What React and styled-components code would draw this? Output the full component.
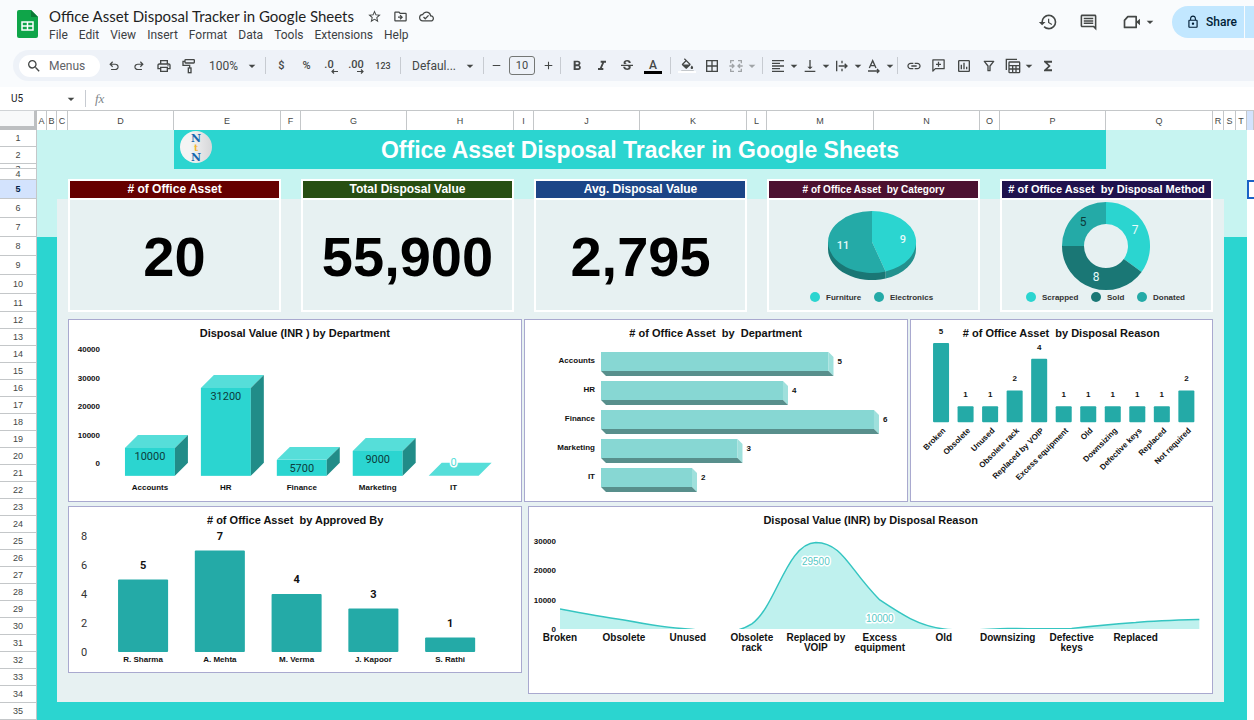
import React from "react";
import styled, { createGlobalStyle, css } from "styled-components";
import {
  MdStarBorder, MdOutlineDriveFileMove, MdOutlineCloudDone, MdOutlinePrint,
  MdArrowDropDown, MdRemove, MdAdd, MdFormatBold, MdFormatItalic,
  MdStrikethroughS, MdFormatColorFill, MdBorderAll, MdFormatAlignLeft,
  MdVerticalAlignBottom, MdLink, MdOutlineInsertChart, MdFunctions, MdHistory,
  MdOutlineComment, MdLockOutline, MdSearch,
} from "react-icons/md";

const sans = '"Liberation Sans", Arial, sans-serif';
const ui = 'Roboto, Inter, sans-serif';
const aqua = "#2bd5d0";
const teal = "#24aaa7";
const deep = "#1a7775";
const pale = "#c7f4f1";
const mist = "#e7f1f2";

const GlobalStyle = createGlobalStyle`
  * { box-sizing: border-box; }
  body { margin: 0; background: #fff; overflow: hidden; }
  button, input, select { font: inherit; color: inherit; border: 0; padding: 0; margin: 0; background: none; outline: none; }
  h1, h2, p { margin: 0; }
  svg { display: block; flex: none; }
`;

/* ---------- shell ---------- */

const Shell = styled.div`
  min-height: 100vh;
  display: flex;
  flex-direction: column;
  font-family: ${ui};
  color: #444746;
`;

const TopBar = styled.header`
  display: flex;
  align-items: flex-start;
  height: 50px;
  padding-left: 17px;
  background: #f9fbfd;
`;

const SheetsLogo = styled.svg`
  margin: 10px 11px 0 0;
`;

const DocColumn = styled.div`
  padding-top: 6px;
`;

const DocRow = styled.div`
  display: flex;
  align-items: center;
  height: 21px;
`;

const DocTitle = styled.h1`
  font: 400 15px/21px Lato, ${ui};
  color: #1f1f1f;
  margin-right: 13px;
  white-space: nowrap;
`;

const DocButton = styled.button`
  width: 26px;
  display: flex;
  color: #444746;
`;

const MenuBar = styled.nav`
  display: flex;
  gap: 11px;
  font-size: 12px;
  line-height: 16px;
`;

const MenuItem = styled.button`
  color: #3c4043;
`;

const TopActions = styled.div`
  display: flex;
  align-items: center;
  margin-left: auto;
  padding-top: 6px;
`;

const ActionButton = styled.button`
  width: 40px;
  height: 32px;
  display: flex;
  align-items: center;
  justify-content: center;
`;

const VideoButton = styled(ActionButton)`
  width: 50px;
  margin-left: 7px;
`;

const ShareGroup = styled.div`
  display: flex;
  gap: 1px;
  margin-left: 7px;
`;

const ShareButton = styled.button`
  display: flex;
  align-items: center;
  gap: 6px;
  width: 72px;
  height: 32px;
  padding-left: 14px;
  border-radius: 16px 0 0 16px;
  background: #c2e7ff;
  color: #001d35;
  font-size: 12px;
  font-weight: 500;
`;

const ShareMore = styled.button`
  width: 9px;
  background: #c2e7ff;
`;

/* ---------- toolbar ---------- */

const ToolbarBand = styled.div`
  background: #f9fbfd;
  padding: 0 0 6px 13px;
`;

const Toolbar = styled.div`
  display: flex;
  align-items: center;
  height: 31px;
  padding-left: 6px;
  border-radius: 16px 0 0 16px;
  background: #eef2f8;
  overflow: hidden;
  font-size: 12px;
`;

const SearchPill = styled.label`
  display: flex;
  align-items: center;
  gap: 7px;
  width: 81px;
  height: 22px;
  margin-right: 1px;
  padding-left: 7px;
  border-radius: 11px;
  background: #fff;

  input { width: 50px; font-size: 12px; }
  input::placeholder { color: #5f6368; opacity: 1; }
`;

const ToolButton = styled.button`
  display: flex;
  align-items: center;
  justify-content: center;
  flex: none;
  width: ${(p) => p.$w || 25}px;
  height: 25px;
  font-size: ${(p) => p.$text || 12}px;
  font-weight: 500;
  opacity: ${(p) => (p.$faded ? 0.45 : 1)};
`;

const CaretTool = styled(ToolButton)`
  justify-content: flex-start;
  padding-left: 4px;
`;

const Divider = styled.span`
  flex: none;
  width: 1px;
  height: 17px;
  margin: 0 3px;
  background: #c7cbd1;
`;

const Picker = styled.label`
  display: flex;
  align-items: center;
  flex: none;
  width: ${(p) => p.$w}px;
  padding: 0 2px 0 8px;

  select { appearance: none; flex: 1; width: 20px; font-size: 12px; }
`;

const SizeInput = styled.input`
  && {
    flex: none;
    width: 26px;
    height: 19px;
    margin: 0 4px;
    border: 1px solid #747775;
    border-radius: 3px;
    text-align: center;
    font-size: 11px;
  }
`;

const FormulaBar = styled.div`
  display: flex;
  align-items: center;
  height: 23px;
  font-size: 10px;
  background: #fff;
`;

const NameBox = styled.label`
  display: flex;
  align-items: center;
  width: 82px;
  padding-left: 11px;

  input { width: 52px; color: #202124; }
`;

const FormulaField = styled.label`
  display: flex;
  flex: 1;
  align-items: center;
  padding-left: 6px;
  font: italic 13px "Liberation Serif", serif;
  color: #80868b;

  input { flex: 1; margin-left: 8px; }
`;

/* ---------- sheet ---------- */

const columns = [
  ["A", 10], ["B", 10], ["C", 11], ["D", 106], ["E", 107], ["F", 20], ["G", 106],
  ["H", 107], ["I", 20], ["J", 106], ["K", 107], ["L", 20], ["M", 107], ["N", 106],
  ["O", 20], ["P", 106], ["Q", 107], ["R", 11], ["S", 12], ["T", 11], ["", 7],
];
const track = columns.map((c) => `minmax(0, ${c[1]}fr)`).join(" ");

const rowHeights = { 3: 5, 4: 11, 5: 19, 6: 19, 7: 19, 8: 19, 9: 19, 10: 19, 11: 18 };
const rows = Array.from({ length: 35 }, (_, i) => ({ n: i + 1, h: rowHeights[i + 1] || 17 }));

const Sheet = styled.main`
  flex: 1;
  display: grid;
  grid-template-columns: 37px minmax(0, 1fr);
  grid-template-rows: 20px 1fr;
  font-family: ${sans};
`;

const Corner = styled.div`
  border-top: 1px solid #d0d3d6;
  border-right: 3px solid #bdbfc1;
  border-bottom: 4px solid #bdbfc1;
  background: #f8f9fa;
`;

const ColumnHeads = styled.div`
  display: grid;
  grid-template-columns: ${track};
  border-top: 1px solid #c4c7c9;
`;

const ColumnHead = styled.div`
  display: flex;
  align-items: center;
  justify-content: center;
  border-right: 1px solid #c4c7c9;
  font-size: 9px;
  color: #444746;
  background: ${(p) => (p.$on ? "#d3e3fd" : "#fff")};
`;

const RowHeads = styled.div`
  border-right: 1px solid #c4c7c9;
`;

const RowHead = styled.div`
  display: flex;
  align-items: ${(p) => (p.$h < 10 ? "flex-start" : p.$h < 16 ? "flex-end" : "center")};
  justify-content: center;
  height: ${(p) => p.$h}px;
  overflow: hidden;
  border-bottom: 1px solid #c4c7c9;
  font-size: 9px;
  line-height: 10px;
  color: #444746;
  ${(p) => p.$on && css`background: #d3e3fd; color: #041e49; font-weight: 700;`}
`;

const Canvas = styled.div`
  display: grid;
  grid-template-columns: ${track};
  grid-template-rows: 39px 10px 20px 38px 75px auto minmax(17px, 1fr);
`;

const Fill = styled.div`
  grid-column: ${(p) => p.$cols};
  grid-row: ${(p) => p.$rows};
  background: ${(p) => p.$bg};
`;

const Banner = styled.div`
  grid-column: 5 / 17;
  grid-row: 1;
  display: grid;
  grid-template-columns: 44px 1fr 44px;
  align-items: center;
  background: ${aqua};
`;

const Brand = styled.svg`
  justify-self: end;
  align-self: start;
  margin: 1px 6px 0 0;
`;

const BannerTitle = styled.h2`
  text-align: center;
  font: 700 23px/36px ${sans};
  color: #fff;
  white-space: nowrap;
`;

const SelectedCell = styled.div`
  grid-column: 21;
  grid-row: 3;
  margin-top: 1px;
  border: 2px solid #1a62c6;
  border-right: 0;
`;

const Card = styled.section`
  grid-column: ${(p) => p.$cols};
  grid-row: 3 / 6;
  display: flex;
  flex-direction: column;
  border: 2px solid #fff;
  background: ${mist};
`;

const CardTitle = styled.h2`
  height: 19px;
  border-bottom: 2px solid #fff;
  background: ${(p) => p.$bg};
  color: #fff;
  text-align: center;
  font: 700 ${(p) => p.$size || 11}px/17px ${sans};
  white-space: pre;
`;

const BigNumber = styled.p`
  flex: 1;
  display: flex;
  align-items: center;
  justify-content: center;
  padding-top: 3px;
  font: 700 56px/60px ${sans};
  color: #000;
`;

const ChartGrid = styled.div`
  grid-column: 4 / 18;
  grid-row: 6;
  display: flex;
  flex-direction: column;
  gap: 4px;
  padding: 7px 0 8px;
`;

const ChartRow = styled.div`
  display: flex;
  align-items: flex-start;
  gap: ${(p) => p.$gap}px;
`;

const Panel = styled.section`
  flex: ${(p) => p.$grow} 1 0;
  min-width: 0;
  display: grid;
  border: 1px solid #a9a9cf;
  background: #fff;

  > * { grid-area: 1 / 1; }
`;

const PanelTitle = styled.h2`
  padding-top: 6px;
  text-align: center;
  font: 700 11px/14px ${sans};
  color: #111;
  white-space: pre;
`;

const Plot = styled.svg`
  width: 100%;
  height: auto;
  overflow: visible;
`;

const Label = styled.text`
  font: 700 ${(p) => p.$size || 8}px ${(p) => p.$font || sans};
  font-weight: ${(p) => p.$weight || 700};
  fill: ${(p) => p.$color || "#111"};
  text-anchor: ${(p) => p.$anchor || "middle"};
`;

const HaloLabel = styled(Label)`
  stroke: #fff;
  stroke-width: 3px;
  stroke-linejoin: round;
  paint-order: stroke;
`;

/* ---------- icons ---------- */

const Glyph = ({ d, size = 16, children }) => (
  <svg width={size} height={size} viewBox="0 0 24 24" fill="currentColor" aria-hidden="true">
    {d && <path d={d} />}
    {children}
  </svg>
);

const Caret = () => <MdArrowDropDown size={16} />;

const undoPath = "M7 19v-2h7.1q1.575 0 2.738-1T18 13.5T16.838 11T14.1 10H7.8l2.6 2.6L9 14L4 9l5-5l1.4 1.4L7.8 8h6.3q2.425 0 4.163 1.575T20 13.5t-1.737 3.925T14.1 19z";
const redoPath = "M9.9 19q-2.425 0-4.163-1.575T4 13.5t1.737-3.925T9.9 8h6.3l-2.6-2.6L15 4l5 5l-5 5l-1.4-1.4l2.6-2.6H9.9q-1.575 0-2.738 1T6 13.5T7.163 16T9.9 17H17v2z";

const stroke = { fill: "none", stroke: "currentColor", strokeWidth: 2 };

const RollerIcon = () => (
  <Glyph>
    <g {...stroke}>
      <rect x="6" y="2.500" width="14" height="5" rx="1" />
      <path d="M6 5H3v6h10v4" />
      <rect x="11" y="15" width="4" height="7" />
    </g>
  </Glyph>
);

const ToolSvg = styled.svg`
  overflow: visible;
`;

const DecimalIcon = ({ more }) => (
  <ToolSvg width="20" height="18" viewBox="0 0 20 18" aria-hidden="true">
    <Label x={more ? 9 : 7} y="11" $size={11} $font={ui} $weight={500} $color="#444746">
      {more ? ".00" : ".0"}
    </Label>
    {more
      ? <path d="M10 14.500h6M14 12.500l2 2-2 2" fill="none" stroke="#444746" strokeWidth="1.200" />
      : <path d="M16 14.500h-6M12 12.500l-2 2 2 2" fill="none" stroke="#444746" strokeWidth="1.200" />}
  </ToolSvg>
);

const TextColorIcon = () => (
  <ToolSvg width="18" height="18" viewBox="0 0 18 18" aria-hidden="true">
    <Label x="9" y="12" $size={12} $font={ui} $weight={500} $color="#444746">A</Label>
    <rect y="14" width="18" height="3" fill="#000" />
  </ToolSvg>
);

const FillIcon = () => (
  <svg width="18" height="18" viewBox="0 0 18 18" aria-hidden="true">
    <MdFormatColorFill size={15} x="2" y="0" color="#444746" viewBox="0 0 24 20" />
    <rect y="14" width="18" height="2" fill="#fff" />
  </svg>
);

const MergeIcon = () => (
  <Glyph>
    <g {...stroke}>
      <path d="M9 4H4v4M15 4h5v4M9 20H4v-4M15 20h5v-4M2 12h7M22 12h-7M6 9l3 3-3 3M18 9l-3 3 3 3" />
    </g>
  </Glyph>
);

const WrapIcon = () => (
  <Glyph>
    <g {...stroke}>
      <path d="M4 4v16M12 4v4M12 16v4M7 12h12M16 8.500l3.500 3.500-3.500 3.500" />
    </g>
  </Glyph>
);

const RotateIcon = () => (
  <Glyph>
    <g {...stroke}>
      <path d="M5 15L10 4l5 11M7 11.500h6M3 19.500h16M16.500 16.500l3 3-3 3" />
    </g>
  </Glyph>
);

const AddCommentIcon = () => (
  <Glyph size={15}>
    <g {...stroke}>
      <path d="M3 21V3h18v14H7z" strokeLinejoin="round" />
      <path d="M12 6v8M8 10h8" />
    </g>
  </Glyph>
);

const FilterIcon = () => (
  <Glyph>
    <path {...stroke} d="M5 5h14l-5.500 7v7h-3v-7z" strokeLinejoin="round" />
  </Glyph>
);

const TableIcon = () => (
  <Glyph>
    <g {...stroke}>
      <path d="M2 18V2h16" />
      <rect x="6" y="6" width="16" height="16" rx="1" />
      <path d="M6 11.500h16M6 16.500h16M11.500 11v11M16.500 11v11" />
    </g>
  </Glyph>
);

const VideoIcon = () => (
  <svg width="20" height="20" viewBox="0 0 24 24" aria-hidden="true" fill="none" stroke="#444746" strokeWidth="2">
    <path d="M3 10l4-4.500h10v13H3z" strokeLinejoin="round" />
    <path d="M17 12l4.500-4v8z" fill="#444746" stroke="none" />
  </svg>
);

/* ---------- charts ---------- */

const polar = (cx, cy, rx, ry, turn) => {
  const a = turn * 2 * Math.PI;
  return `${(cx + rx * Math.sin(a)).toFixed(1)} ${(cy - ry * Math.cos(a)).toFixed(1)}`;
};

const LegendItem = ({ x, color, children }) => (
  <>
    <circle cx={x} cy="97" r="5" fill={color} />
    <Label x={x + 11} y="100" $anchor="start" $color="#333">{children}</Label>
  </>
);

function CategoryPie() {
  const cx = 103, cy = 42, rx = 44, ry = 31, depth = 7;
  const split = polar(cx, cy, rx, ry, 9 / 20);
  const splitLow = polar(cx, cy + depth, rx, ry, 9 / 20);
  return (
    <Plot viewBox="0 0 209 110" role="img" aria-label="Office assets by category">
      <path fill="#22918e" d={`M${cx + rx} ${cy}v${depth}A${rx} ${ry} 0 0 1 ${splitLow}L${split}z`} />
      <path fill={deep} d={`M${cx - rx} ${cy}v${depth}A${rx} ${ry} 0 0 0 ${splitLow}L${split}z`} />
      <path fill={aqua} d={`M${cx} ${cy}V${cy - ry}A${rx} ${ry} 0 0 1 ${split}z`} />
      <path fill={teal} d={`M${cx} ${cy}L${split}A${rx} ${ry} 0 1 1 ${cx} ${cy - ry}z`} />
      <Label x="134" y="43" $size={11} $font="Roboto" $weight={500} $color="#e6fbfa">9</Label>
      <Label x="74" y="49" $size={11} $font="Roboto" $weight={500} $color="#e6fbfa">11</Label>
      <LegendItem x={46} color={aqua}>Furniture</LegendItem>
      <LegendItem x={110} color={teal}>Electronics</LegendItem>
    </Plot>
  );
}

function MethodDonut() {
  const cx = 104, cy = 46, R = 44, r = 22;
  const parts = [[0, 7, aqua], [7, 15, deep], [15, 20, teal]];
  return (
    <Plot viewBox="0 0 209 110" role="img" aria-label="Office assets by disposal method">
      {parts.map(([a, b, color]) => (
        <path
          key={a}
          fill={color}
          d={`M${polar(cx, cy, R, R, a / 20)}A${R} ${R} 0 0 1 ${polar(cx, cy, R, R, b / 20)}L${polar(cx, cy, r, r, b / 20)}A${r} ${r} 0 0 0 ${polar(cx, cy, r, r, a / 20)}z`}
        />
      ))}
      <Label x="133" y="34" $size={12} $font="Roboto" $weight={400} $color="#e6fbfa">7</Label>
      <Label x="94" y="81" $size={12} $font="Roboto" $weight={400} $color="#e6fbfa">8</Label>
      <Label x="81" y="26" $size={12} $font="Roboto" $weight={400} $color="#0d3b3a">5</Label>
      <LegendItem x={29} color={aqua}>Scrapped</LegendItem>
      <LegendItem x={94} color={deep}>Sold</LegendItem>
      <LegendItem x={140} color={teal}>Donated</LegendItem>
    </Plot>
  );
}

const deptValues = [["Accounts", 10000], ["HR", 31200], ["Finance", 5700], ["Marketing", 9000], ["IT", 0]];

function DepartmentValue() {
  const base = 156, w = 50, dx = 13, dy = 13;
  return (
    <Plot viewBox="0 0 452 181" role="img" aria-label="Disposal value by department">
      {[40000, 30000, 20000, 10000, 0].map((v, i) => (
        <Label key={v} x="31" y={32 + Math.round(i * 28.5)} $anchor="end">{v}</Label>
      ))}
      {deptValues.map(([name, v], i) => {
        const x = 56 + i * 76;
        const top = base - Math.round(v * 0.00283);
        return (
          <g key={name}>
            {v > 0 && <rect x={x} y={top} width={w} height={base - top} fill={aqua} />}
            <path d={`M${x} ${top}l${dx} ${-dy}h${w}l${-dx} ${dy}z`} fill="#56ded9" />
            {v > 0 && <path d={`M${x + w} ${top}l${dx} ${-dy}V${base - dy}L${x + w} ${base}z`} fill="#218c88" />}
            {v > 0
              ? <Label x={x + 25} y={top + 12} $size={11} $font="Roboto" $weight={400} $color="#0b3d3c">{v}</Label>
              : <HaloLabel x={x + 25} y={base - 10} $size={11} $font="Roboto" $weight={400} $color="#56ded9">{v}</HaloLabel>}
            <Label x={x + 25} y="170">{name}</Label>
          </g>
        );
      })}
    </Plot>
  );
}

const deptCounts = [["Accounts", 5], ["HR", 4], ["Finance", 6], ["Marketing", 3], ["IT", 2]];

function DepartmentCount() {
  return (
    <Plot viewBox="0 0 382 181" role="img" aria-label="Office assets by department">
      {deptCounts.map(([name, n], i) => {
        const top = 32 + i * 29;
        const end = 81 + n * 45.5;
        return (
          <g key={name}>
            <path d={`M76 ${top}H${end - 5}V${top + 19}H76z`} fill="#87d7d3" />
            <path d={`M${end - 5} ${top}l5 5v19l-5 -5z`} fill="#9fe0dc" />
            <path d={`M76 ${top + 19}H${end - 5}l5 5H81z`} fill="#588f8c" />
            <Label x="70" y={top + 11} $anchor="end">{name}</Label>
            <Label x={end + 4} y={top + 12} $anchor="start">{n}</Label>
          </g>
        );
      })}
    </Plot>
  );
}

const reasonCounts = [
  ["Broken", 5], ["Obsolete", 1], ["Unused", 1], ["Obsolete rack", 2], ["Replaced by VOIP", 4],
  ["Excess equipment", 1], ["Old", 1], ["Downsizing", 1], ["Defective keys", 1], ["Replaced", 1], ["Not required", 2],
];

function ReasonCount() {
  return (
    <Plot viewBox="0 0 301 181" role="img" aria-label="Office assets by disposal reason">
      {reasonCounts.map(([name, n], i) => {
        const x = 22 + i * 24.5;
        const h = n * 15.8;
        return (
          <g key={name}>
            <rect x={x} y={102 - h} width="16" height={h} rx="1" fill={teal} />
            <Label x={x + 8} y={93 - h}>{n}</Label>
            <Label $anchor="end" transform={`translate(${x + 13} 111) rotate(-45)`}>{name}</Label>
          </g>
        );
      })}
    </Plot>
  );
}

const approvers = [["R. Sharma", 5], ["A. Mehta", 7], ["M. Verma", 4], ["J. Kapoor", 3], ["S. Rathi", 1]];

function ApproverCount() {
  return (
    <Plot viewBox="0 0 452 165" role="img" aria-label="Office assets by approver">
      {[8, 6, 4, 2, 0].map((v, i) => (
        <Label key={v} x="15" y={33 + i * 29} $size={11} $font="Roboto" $weight={400} $color="#333">{v}</Label>
      ))}
      {approvers.map(([name, n], i) => {
        const x = 49 + i * 76.7;
        const h = n * 14.5;
        return (
          <g key={name}>
            <rect x={x} y={145 - h} width="50" height={h} rx="1" fill={teal} />
            <Label x={x + 25} y={134 - h} $size={11} $font="Roboto">{n}</Label>
            <Label x={x + 25} y="155">{name}</Label>
          </g>
        );
      })}
    </Plot>
  );
}

const curve =
  "M31 102C52 106 74 110 95 113C116 117 138 121 159 122C181 124 202 130 223 117C247 100 258 36 287 35.500C314 36 320 62 351 93C372 107 390 119 415 122C436 125 458 122 479 121.500C500 122 522 122 543 121.500C564 119 586 117 607 115.500C628 113.500 650 113 671 112.500";

const reasonTicks = [
  ["Broken"], ["Obsolete"], ["Unused"], ["Obsolete", "rack"], ["Replaced by", "VOIP"],
  ["Excess", "equipment"], ["Old"], ["Downsizing"], ["Defective", "keys"], ["Replaced"],
];

function ReasonValue() {
  return (
    <Plot viewBox="0 0 683 186" role="img" aria-label="Disposal value by disposal reason">
      <clipPath id="plot-area"><rect x="31" y="20" width="640" height="102" /></clipPath>
      <g clipPath="url(#plot-area)">
        <path d={`${curve}V122H31z`} fill="#bff1ee" />
        <path d={curve} fill="none" stroke="#35c5c1" strokeWidth="1.500" />
      </g>
      {[30000, 20000, 10000, 0].map((v, i) => (
        <Label key={v} x="27" y={37 + Math.round(i * 29.3)} $anchor="end">{v}</Label>
      ))}
      <HaloLabel x="287" y="58" $size={10} $weight={400} $color="#56c9c5">29500</HaloLabel>
      <HaloLabel x="351" y="115" $size={10} $weight={400} $color="#56c9c5">10000</HaloLabel>
      {reasonTicks.map((lines, i) =>
        lines.map((line, j) => (
          <Label key={line} x={31 + i * 64} y={134 + j * 10} $size={10}>{line}</Label>
        ))
      )}
    </Plot>
  );
}

/* ---------- page ---------- */

const menus = ["File", "Edit", "View", "Insert", "Format", "Data", "Tools", "Extensions", "Help"];

export default function App() {
  return (
    <Shell>
      <GlobalStyle />
      <TopBar>
        <SheetsLogo width="21" height="28" viewBox="0 0 21 28" aria-label="Sheets">
          <path d="M2 0h12l7 7v19a2 2 0 0 1-2 2H2a2 2 0 0 1-2-2V2a2 2 0 0 1 2-2z" fill="#0fa549" />
          <path d="M14 0l7 7h-7z" fill="#0b7a36" />
          <rect x="5" y="12" width="11" height="8" fill="none" stroke="#fff" strokeWidth="1.500" />
          <path d="M5 16h11M10.500 12v8" stroke="#fff" strokeWidth="1.500" />
        </SheetsLogo>
        <DocColumn>
          <DocRow>
            <DocTitle>Office Asset Disposal Tracker in Google Sheets</DocTitle>
            <DocButton aria-label="Star"><MdStarBorder size={15} /></DocButton>
            <DocButton aria-label="Move"><MdOutlineDriveFileMove size={15} /></DocButton>
            <DocButton aria-label="Saved to Drive"><MdOutlineCloudDone size={15} /></DocButton>
          </DocRow>
          <MenuBar>
            {menus.map((m) => <MenuItem key={m}>{m}</MenuItem>)}
          </MenuBar>
        </DocColumn>
        <TopActions>
          <ActionButton aria-label="Version history"><MdHistory size={20} /></ActionButton>
          <ActionButton aria-label="Comments"><MdOutlineComment size={19} /></ActionButton>
          <VideoButton aria-label="Join a call"><VideoIcon /><Caret /></VideoButton>
          <ShareGroup>
            <ShareButton><MdLockOutline size={14} />Share</ShareButton>
            <ShareMore aria-label="Share options" />
          </ShareGroup>
        </TopActions>
      </TopBar>

      <ToolbarBand>
        <Toolbar>
          <SearchPill>
            <MdSearch size={16} />
            <input placeholder="Menus" aria-label="Search the menus" />
          </SearchPill>
          <ToolButton aria-label="Undo"><Glyph d={undoPath} size={14} /></ToolButton>
          <ToolButton aria-label="Redo"><Glyph d={redoPath} size={14} /></ToolButton>
          <ToolButton aria-label="Print"><MdOutlinePrint size={16} /></ToolButton>
          <ToolButton aria-label="Paint format"><RollerIcon /></ToolButton>
          <Picker $w={61}>
            <select aria-label="Zoom"><option>100%</option></select>
            <Caret />
          </Picker>
          <Divider />
          <ToolButton $text={11}>$</ToolButton>
          <ToolButton $text={11}>%</ToolButton>
          <ToolButton aria-label="Decrease decimal places"><DecimalIcon /></ToolButton>
          <ToolButton aria-label="Increase decimal places"><DecimalIcon more /></ToolButton>
          <ToolButton $w={28} $text={9}>123</ToolButton>
          <Divider />
          <Picker $w={76}>
            <select aria-label="Font"><option>Defaul...</option></select>
            <Caret />
          </Picker>
          <Divider />
          <ToolButton $w={18} aria-label="Decrease font size"><MdRemove size={13} /></ToolButton>
          <SizeInput aria-label="Font size" defaultValue="10" />
          <ToolButton $w={18} aria-label="Increase font size"><MdAdd size={13} /></ToolButton>
          <Divider />
          <ToolButton aria-label="Bold"><MdFormatBold size={16} /></ToolButton>
          <ToolButton aria-label="Italic"><MdFormatItalic size={16} /></ToolButton>
          <ToolButton aria-label="Strikethrough"><MdStrikethroughS size={16} /></ToolButton>
          <ToolButton $w={28} aria-label="Text color"><TextColorIcon /></ToolButton>
          <Divider />
          <ToolButton aria-label="Fill color"><FillIcon /></ToolButton>
          <ToolButton aria-label="Borders"><MdBorderAll size={16} /></ToolButton>
          <CaretTool $w={35} $faded aria-label="Merge cells"><MergeIcon /><Caret /></CaretTool>
          <Divider />
          <CaretTool $w={32} aria-label="Horizontal align"><MdFormatAlignLeft size={16} /><Caret /></CaretTool>
          <CaretTool $w={32} aria-label="Vertical align"><MdVerticalAlignBottom size={16} /><Caret /></CaretTool>
          <CaretTool $w={32} aria-label="Text wrapping"><WrapIcon /><Caret /></CaretTool>
          <CaretTool $w={32} aria-label="Text rotation"><RotateIcon /><Caret /></CaretTool>
          <Divider />
          <ToolButton aria-label="Insert link"><MdLink size={16} /></ToolButton>
          <ToolButton aria-label="Insert comment"><AddCommentIcon /></ToolButton>
          <ToolButton aria-label="Insert chart"><MdOutlineInsertChart size={16} /></ToolButton>
          <ToolButton aria-label="Create a filter"><FilterIcon /></ToolButton>
          <CaretTool $w={34} aria-label="Table views"><TableIcon /><Caret /></CaretTool>
          <ToolButton aria-label="Functions"><MdFunctions size={16} /></ToolButton>
        </Toolbar>
      </ToolbarBand>

      <FormulaBar>
        <NameBox>
          <input aria-label="Name box" defaultValue="U5" />
          <Caret />
        </NameBox>
        <Divider />
        <FormulaField>fx<input aria-label="Formula" /></FormulaField>
      </FormulaBar>

      <Sheet>
        <Corner />
        <ColumnHeads>
          {columns.map(([name]) => <ColumnHead key={name} $on={!name}>{name}</ColumnHead>)}
        </ColumnHeads>
        <RowHeads>
          {rows.map(({ n, h }) => <RowHead key={n} $h={h} $on={n === 5}>{n}</RowHead>)}
        </RowHeads>
        <Canvas>
          <Fill $cols="1 / 21" $rows="1 / 5" $bg={pale} />
          <Fill $cols="1 / 21" $rows="5 / 8" $bg={aqua} />
          <Fill $cols="3 / 19" $rows="4 / 7" $bg={mist} />
          <Banner>
            <Brand width="32" height="32" viewBox="0 0 32 32" aria-label="NtN">
              <defs>
                <linearGradient id="disc" x1="0" y1="0" x2="1" y2="0">
                  <stop offset="0.300" stopColor="#f4f4f4" />
                  <stop offset="1" stopColor="#d6d7d9" />
                </linearGradient>
              </defs>
              <circle cx="16" cy="16" r="16" fill="url(#disc)" />
              <Label x="16" y="11" $size={11} $font="'DejaVu Serif', serif" $color="#1767ae">N</Label>
              <Label x="16" y="20" $size={9} $font="'DejaVu Serif', serif" $color="#f2b632">t</Label>
              <Label x="16" y="30" $size={11} $font="'DejaVu Serif', serif" $color="#1767ae">N</Label>
            </Brand>
            <BannerTitle>Office Asset Disposal Tracker in Google Sheets</BannerTitle>
          </Banner>
          <SelectedCell />

          <Card $cols="4 / 6">
            <CardTitle $bg="#660000" $size={12}># of Office Asset</CardTitle>
            <BigNumber>20</BigNumber>
          </Card>
          <Card $cols="7 / 9">
            <CardTitle $bg="#274e13" $size={12}>Total Disposal Value</CardTitle>
            <BigNumber>55,900</BigNumber>
          </Card>
          <Card $cols="10 / 12">
            <CardTitle $bg="#1c4587" $size={12}>Avg. Disposal Value</CardTitle>
            <BigNumber>2,795</BigNumber>
          </Card>
          <Card $cols="13 / 15">
            <CardTitle $bg="#4c1130" $size={10}>{"# of Office Asset  by Category"}</CardTitle>
            <CategoryPie />
          </Card>
          <Card $cols="16 / 18">
            <CardTitle $bg="#20124d">{"# of Office Asset  by Disposal Method"}</CardTitle>
            <MethodDonut />
          </Card>

          <ChartGrid>
            <ChartRow $gap={2}>
              <Panel $grow={454}>
                <PanelTitle>Disposal Value (INR ) by Department</PanelTitle>
                <DepartmentValue />
              </Panel>
              <Panel $grow={384}>
                <PanelTitle>{"# of Office Asset  by  Department"}</PanelTitle>
                <DepartmentCount />
              </Panel>
              <Panel $grow={303}>
                <PanelTitle>{"# of Office Asset  by Disposal Reason"}</PanelTitle>
                <ReasonCount />
              </Panel>
            </ChartRow>
            <ChartRow $gap={6}>
              <Panel $grow={454}>
                <PanelTitle>{"# of Office Asset  by Approved By"}</PanelTitle>
                <ApproverCount />
              </Panel>
              <Panel $grow={685}>
                <PanelTitle>Disposal Value (INR) by Disposal Reason</PanelTitle>
                <ReasonValue />
              </Panel>
            </ChartRow>
          </ChartGrid>
        </Canvas>
      </Sheet>
    </Shell>
  );
}
